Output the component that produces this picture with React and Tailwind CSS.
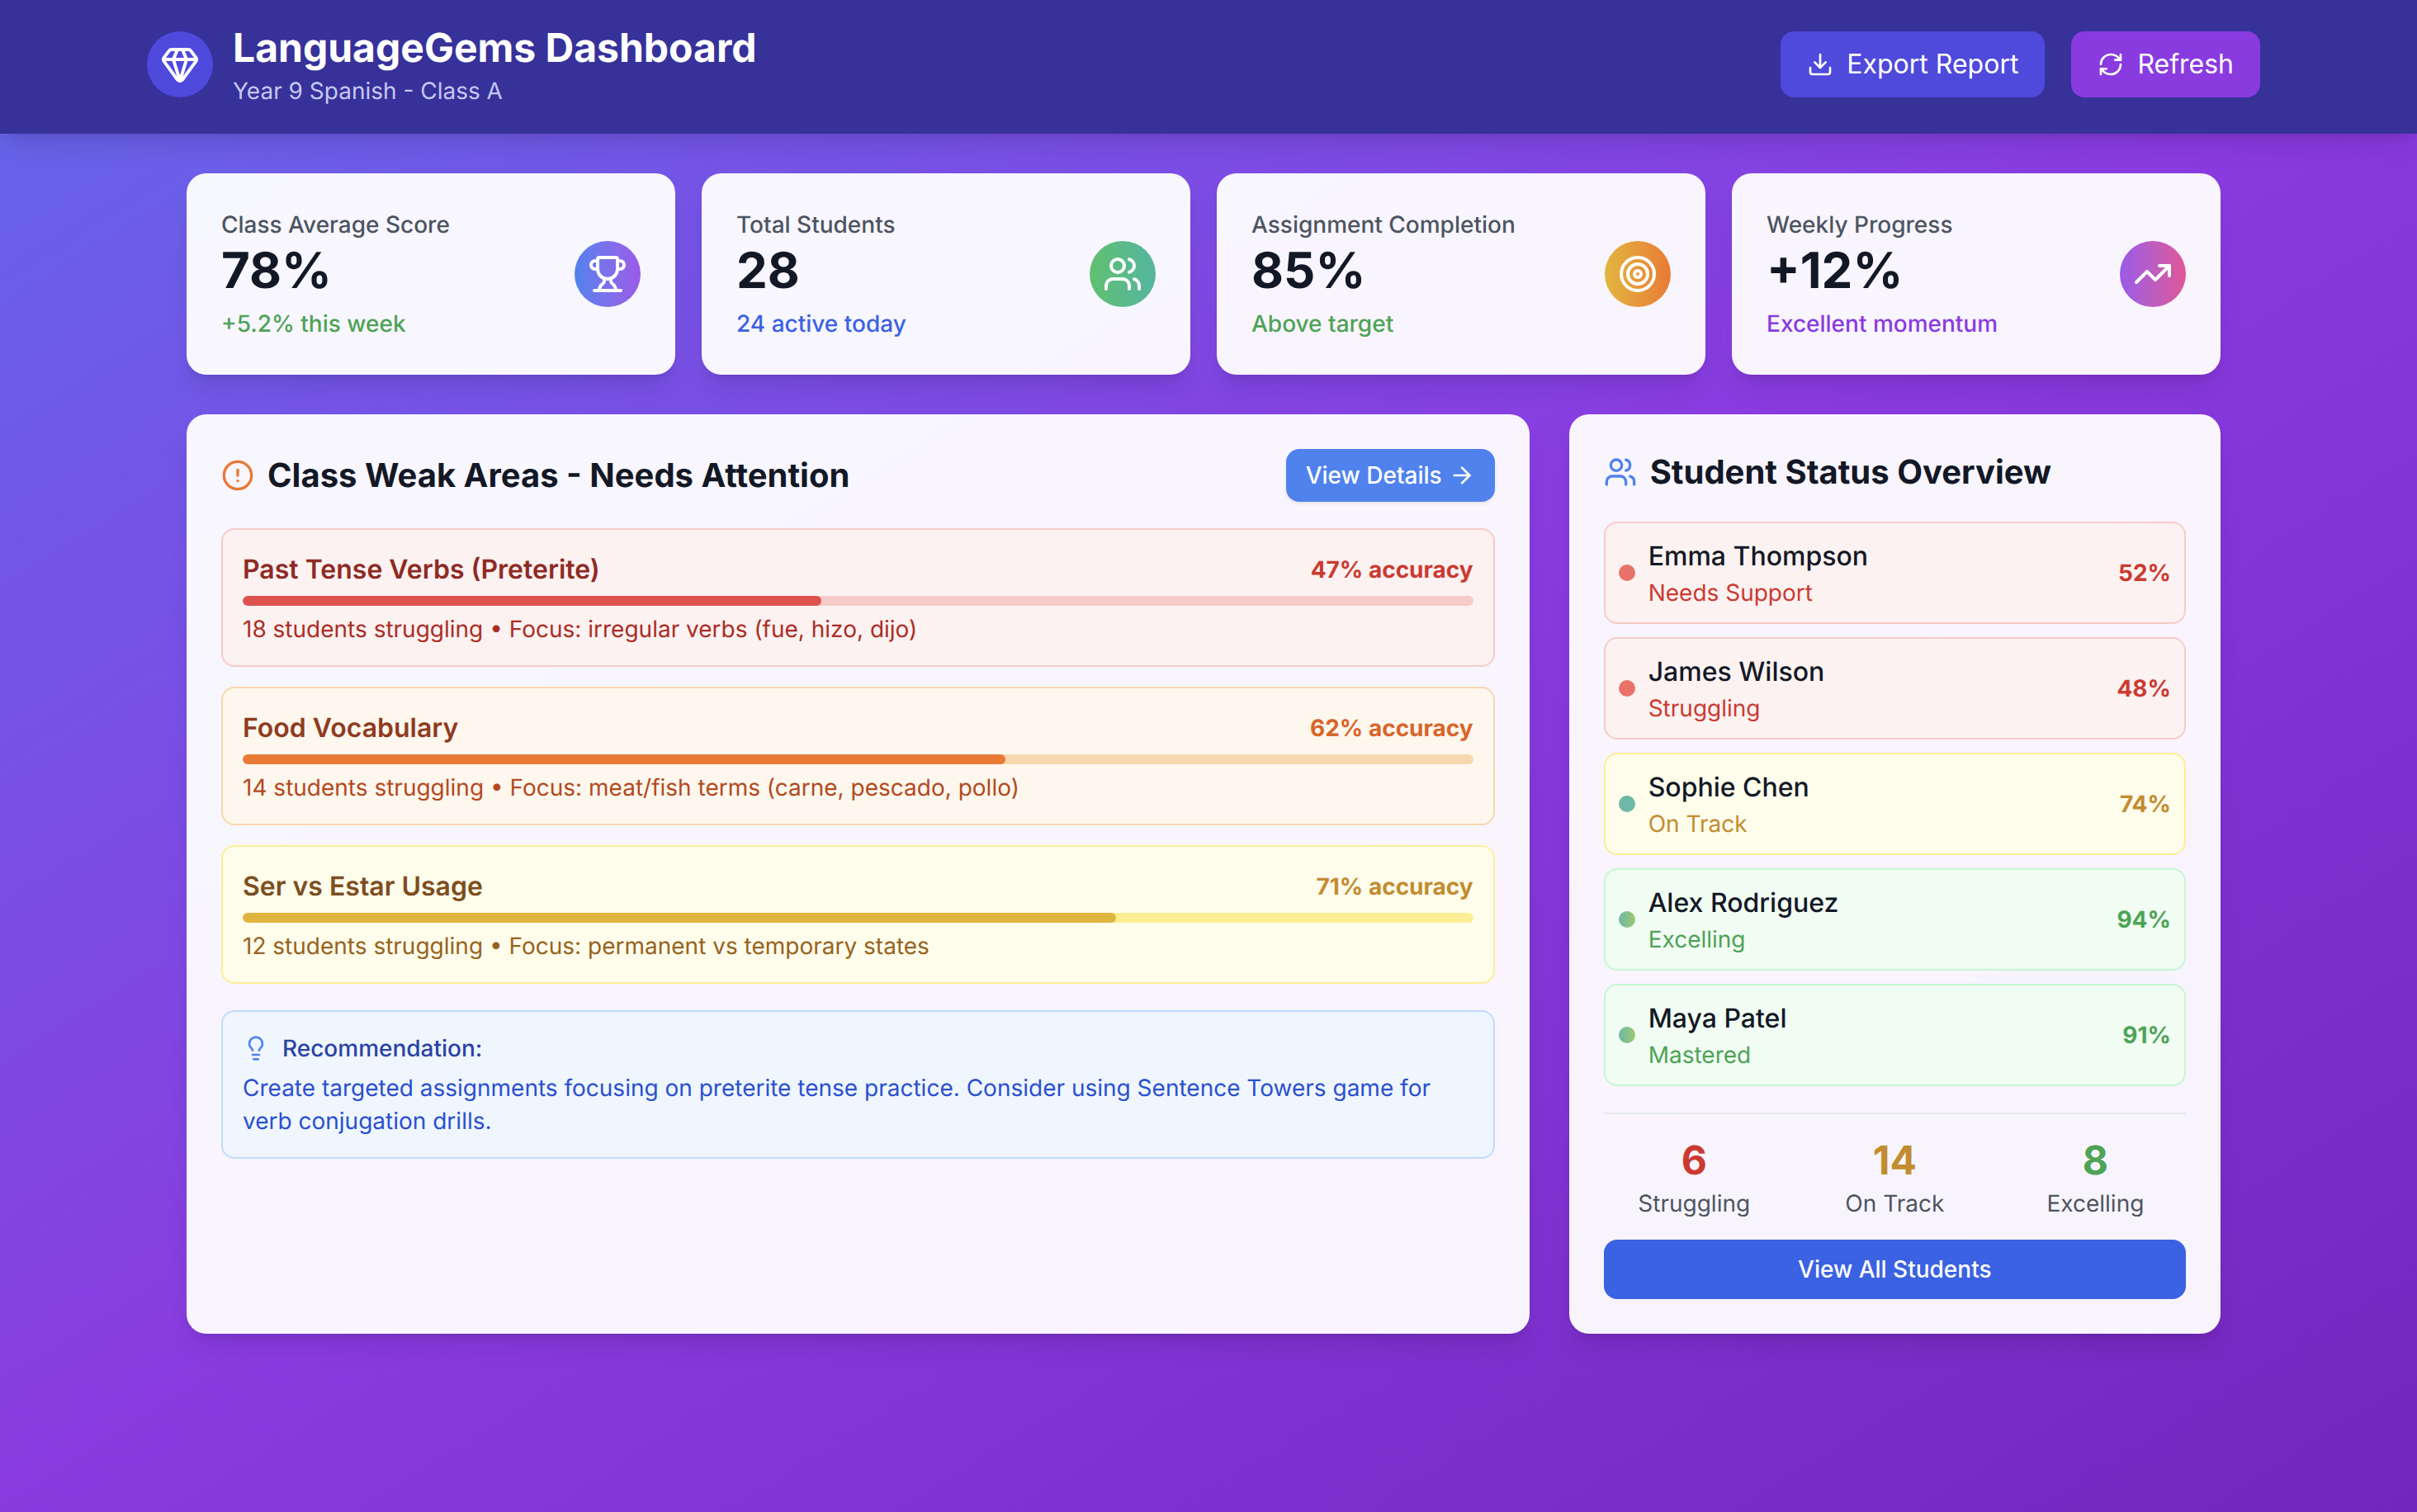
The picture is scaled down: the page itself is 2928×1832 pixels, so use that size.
import React from "react";
import { Gem, Download, RefreshCw, Trophy, Users, Target, TrendingUp, CircleAlert, ArrowRight, Lightbulb } from "lucide-react";

const stats = [
  { label: "Class Average Score", value: "78%", note: "+5.2% this week", noteCls: "text-[#4ea356]", circle: "bg-linear-to-r from-[#4f82ed] to-[#9a5ae8]", Icon: Trophy },
  { label: "Total Students", value: "28", note: "24 active today", noteCls: "text-[#3a62e2]", circle: "bg-linear-to-r from-[#61c06e] to-[#55b5a0]", Icon: Users },
  { label: "Assignment Completion", value: "85%", note: "Above target", noteCls: "text-[#4ea356]", circle: "bg-linear-to-r from-[#e2b53f] to-[#e87a36]", Icon: Target },
  { label: "Weekly Progress", value: "+12%", note: "Excellent momentum", noteCls: "text-[#8a3be0]", circle: "bg-linear-to-r from-[#9a5ae8] to-[#df5596]", Icon: TrendingUp },
];

const areas = [
  { title: "Past Tense Verbs (Preterite)", acc: "47% accuracy", detail: "18 students struggling • Focus: irregular verbs (fue, hizo, dijo)", box: "bg-[#fcf2f1] border-[#f6cbc9]", titleCls: "text-[#8e2a25]", accCls: "text-[#cb3a31]", track: "bg-[#f6cbc9]", bar: "bg-[#dd524f] w-[47%]", detailCls: "text-[#ab2d26]" },
  { title: "Food Vocabulary", acc: "62% accuracy", detail: "14 students struggling • Focus: meat/fish terms (carne, pescado, pollo)", box: "bg-[#fef7ee] border-[#f7d7ae]", titleCls: "text-[#8f3b1f]", accCls: "text-[#d8652b]", track: "bg-[#f7d7ae]", bar: "bg-[#e87a36] w-[62%]", detailCls: "text-[#b34a20]" },
  { title: "Ser vs Estar Usage", acc: "71% accuracy", detail: "12 students struggling • Focus: permanent vs temporary states", box: "bg-[#fefceb] border-[#fbef95]", titleCls: "text-[#7d4e1f]", accCls: "text-[#c28c2f]", track: "bg-[#fbef95]", bar: "bg-[#e0b53f] w-[71%]", detailCls: "text-[#966321]" },
];

const students = [
  { name: "Emma Thompson", status: "Needs Support", pct: "52%", box: "bg-[#fcf2f1] border-[#f6cbc9]", dot: "bg-[#e8726a]", col: "text-[#cb3a31]" },
  { name: "James Wilson", status: "Struggling", pct: "48%", box: "bg-[#fcf2f1] border-[#f6cbc9]", dot: "bg-[#e8726a]", col: "text-[#cb3a31]" },
  { name: "Sophie Chen", status: "On Track", pct: "74%", box: "bg-[#fefceb] border-[#fbef95]", dot: "bg-[#6db8a8]", col: "text-[#c28c2f]" },
  { name: "Alex Rodriguez", status: "Excelling", pct: "94%", box: "bg-[#f1fdf3] border-[#c5f6d2]", dot: "bg-linear-to-r from-[#6db8a8] to-[#9cc96c]", col: "text-[#4ea356]" },
  { name: "Maya Patel", status: "Mastered", pct: "91%", box: "bg-[#f1fdf3] border-[#c5f6d2]", dot: "bg-linear-to-r from-[#6db8a8] to-[#9cc96c]", col: "text-[#4ea356]" },
];

const totals = [
  { n: "6", label: "Struggling", col: "text-[#cb3a31]" },
  { n: "14", label: "On Track", col: "text-[#c28c2f]" },
  { n: "8", label: "Excelling", col: "text-[#4ea356]" },
];

const cardShadow = "shadow-[0_20px_30px_-6px_rgba(0,0,0,0.1),0_8px_12px_-8px_rgba(0,0,0,0.1)]";

export default function App() {
  return (
    <div className="min-h-screen font-['Inter',sans-serif] [text-rendering:geometricPrecision] bg-[linear-gradient(to_bottom_right,#6467ea,#8a3be0_50%,#7326bd)]">
      <header className="bg-[#37319a] pr-3 shadow-[0_20px_30px_-6px_rgba(0,0,0,0.1),0_8px_12px_-8px_rgba(0,0,0,0.1)]">
        <div className="mx-auto flex max-w-[2560px] items-center justify-between pt-[26px] pb-[32px]">
          <div className="flex items-center gap-6">
            <div className="flex h-20 w-20 items-center justify-center rounded-full bg-[#4f49dc]">
              <Gem size={48} className="text-white" />
            </div>
            <div>
              <h1 className="text-[48px] leading-[64px] font-bold text-white">LanguageGems Dashboard</h1>
              <p className="text-[28px] leading-[40px] text-[#c5c8f4]">Year 9 Spanish - Class A</p>
            </div>
          </div>
          <div className="flex items-center gap-8">
            <button className="flex h-20 items-center gap-4 rounded-2xl bg-[#4f49dc] px-8 text-[32px] leading-[48px] font-normal text-white">
              <Download size={32} />
              Export Report
            </button>
            <button className="flex h-20 items-center gap-4 rounded-2xl bg-[#8a3be0] px-8 text-[32px] leading-[48px] font-normal text-white">
              <RefreshCw size={32} />
              Refresh
            </button>
          </div>
        </div>
      </header>

      <main className="pr-3">
        <div className="mx-auto max-w-[2560px] px-12 py-12">
          <div className="mb-12 grid grid-cols-4 gap-8">
            {stats.map(({ label, value, note, noteCls, circle, Icon }) => (
              <div key={label} className={`flex items-center justify-between rounded-3xl bg-white/95 p-[42px] ${cardShadow}`}>
                <div>
                  <p className="text-[28px] leading-[40px] font-medium text-[#4c5561]">{label}</p>
                  <p className="text-[60px] leading-[72px] font-bold text-[#131826]">{value}</p>
                  <p className={`mt-2 text-[28px] leading-[40px] font-medium ${noteCls}`}>{note}</p>
                </div>
                <div className={`flex h-20 w-20 items-center justify-center rounded-full ${circle}`}>
                  <Icon size={48} className="text-white" />
                </div>
              </div>
            ))}
          </div>

          <div className="grid grid-cols-3 gap-12">
            <section className={`col-span-2 rounded-3xl bg-white/95 p-[42px] ${cardShadow}`}>
              <div className="mb-8 flex items-center justify-between">
                <h2 className="flex items-center gap-4 text-[40px] leading-[56px] font-bold text-[#131826]">
                  <CircleAlert size={40} className="text-[#e87a36]" />
                  Class Weak Areas - Needs Attention
                </h2>
                <button className="flex items-center gap-2 rounded-2xl bg-[#5082ed] px-6 py-3 text-[28px] leading-[40px] font-medium text-white shadow-[0_2px_4px_rgba(0,0,0,0.08)]">
                  View Details
                  <ArrowRight size={32} />
                </button>
              </div>

              <div className="flex flex-col gap-6">
                {areas.map((a) => (
                  <div key={a.title} className={`rounded-2xl border-2 p-6 ${a.box}`}>
                    <div className="mb-2 flex items-center justify-between">
                      <span className={`text-[32px] leading-[48px] font-semibold ${a.titleCls}`}>{a.title}</span>
                      <span className={`text-[28px] leading-[40px] font-bold ${a.accCls}`}>{a.acc}</span>
                    </div>
                    <div className={`mb-2 h-3 overflow-hidden rounded-full ${a.track}`}>
                      <div className={`h-3 rounded-full ${a.bar}`} />
                    </div>
                    <p className={`text-[28px] leading-[40px] ${a.detailCls}`}>{a.detail}</p>
                  </div>
                ))}
              </div>

              <div className="mt-8 rounded-2xl border-2 border-[#c2dafb] bg-[#eff6fe] p-6">
                <div className="mb-2 flex items-center gap-4">
                  <Lightbulb size={32} className="text-[#5082ed]" />
                  <span className="text-[28px] leading-[40px] font-medium text-[#2a43a5]">Recommendation:</span>
                </div>
                <p className="text-[28px] leading-[40px] text-[#2b50cf]">
                  Create targeted assignments focusing on preterite tense practice. Consider using Sentence Towers game for verb conjugation drills.
                </p>
              </div>
            </section>

            <section className={`rounded-3xl bg-white/95 p-[42px] ${cardShadow}`}>
              <h2 className="mb-8 flex items-center gap-4 text-[40px] leading-[56px] font-bold text-[#131826]">
                <Users size={40} className="text-[#5082ed]" />
                Student Status Overview
              </h2>
              <div className="flex flex-col gap-4">
                {students.map((s) => (
                  <div key={s.name} className={`flex items-center justify-between rounded-2xl border-2 p-4 ${s.box}`}>
                    <div className="flex items-center gap-4">
                      <span className={`h-5 w-5 rounded-full ${s.dot}`} />
                      <div>
                        <p className="text-[32px] leading-[48px] font-medium text-[#131826]">{s.name}</p>
                        <p className={`text-[28px] leading-[40px] ${s.col}`}>{s.status}</p>
                      </div>
                    </div>
                    <span className={`text-[28px] leading-[40px] font-bold ${s.col}`}>{s.pct}</span>
                  </div>
                ))}
              </div>
              <div className="mt-8 border-t-2 border-[#e8e9ee] pt-6">
                <div className="grid grid-cols-3 gap-6 text-center">
                  {totals.map((t) => (
                    <div key={t.label}>
                      <p className={`text-[48px] leading-[64px] font-bold ${t.col}`}>{t.n}</p>
                      <p className="text-[28px] leading-[40px] text-[#4c5561]">{t.label}</p>
                    </div>
                  ))}
                </div>
                <button className="mt-6 h-[72px] w-full rounded-2xl bg-[#3a62e2] text-[28px] leading-[40px] font-medium text-white">
                  View All Students
                </button>
              </div>
            </section>
          </div>
        </div>
      </main>
    </div>
  );
}
